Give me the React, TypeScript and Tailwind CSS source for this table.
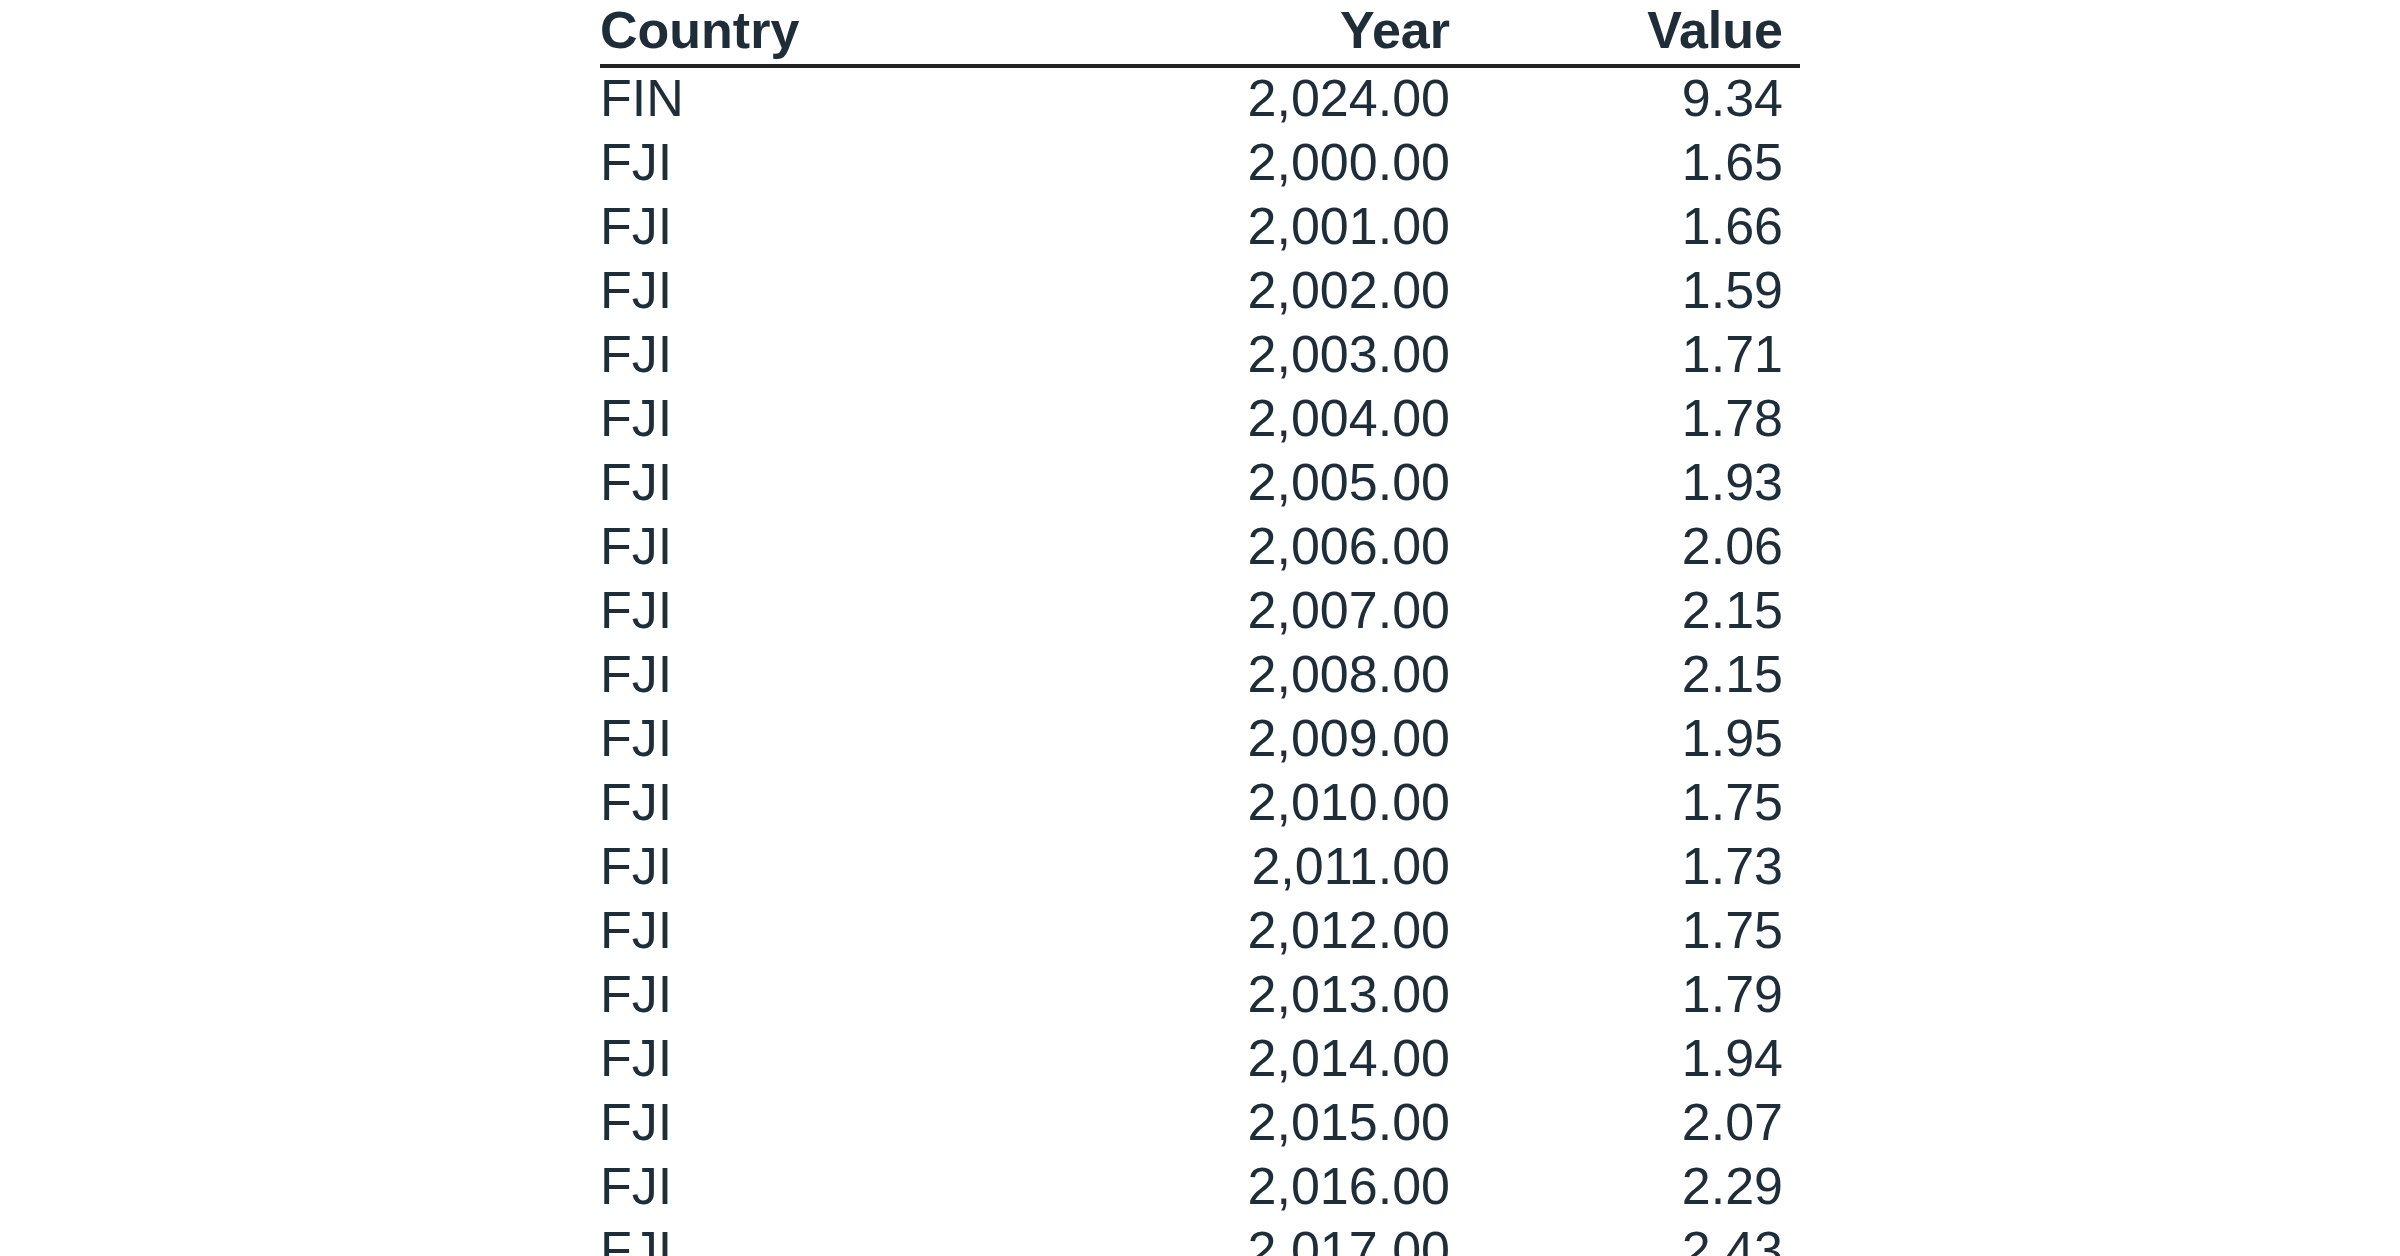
import React from 'react';

const rows: [string, string, string][] = [
  ['FIN', '2,024.00', '9.34'],
  ['FJI', '2,000.00', '1.65'],
  ['FJI', '2,001.00', '1.66'],
  ['FJI', '2,002.00', '1.59'],
  ['FJI', '2,003.00', '1.71'],
  ['FJI', '2,004.00', '1.78'],
  ['FJI', '2,005.00', '1.93'],
  ['FJI', '2,006.00', '2.06'],
  ['FJI', '2,007.00', '2.15'],
  ['FJI', '2,008.00', '2.15'],
  ['FJI', '2,009.00', '1.95'],
  ['FJI', '2,010.00', '1.75'],
  ['FJI', '2,011.00', '1.73'],
  ['FJI', '2,012.00', '1.75'],
  ['FJI', '2,013.00', '1.79'],
  ['FJI', '2,014.00', '1.94'],
  ['FJI', '2,015.00', '2.07'],
  ['FJI', '2,016.00', '2.29'],
  ['FJI', '2,017.00', '2.43'],
];

const App: React.FC = () => {
  return (
    <div className="w-full h-[1256px] overflow-hidden bg-white font-['Liberation_Sans',Arial,sans-serif] text-[#1e2d38]">
      <div className="w-[1200px] mx-auto">
        {/* header */}
        <div className="grid grid-cols-[461px_400px_339px] h-16 border-b-4 border-[#222222] box-content text-[52px] font-bold leading-[60px]">
          <div>Country</div>
          <div className="text-right pr-[11px]">Year</div>
          <div className="text-right pr-[17px]">Value</div>
        </div>
        {/* body */}
        {rows.map(([country, year, value], i) => (
          <div key={i} className="grid grid-cols-[461px_400px_339px] h-16 text-[52px] leading-[60px]">
            <div>{country}</div>
            <div className="text-right pr-[11px]">{year}</div>
            <div className="text-right pr-[17px]">{value}</div>
          </div>
        ))}
      </div>
    </div>
  );
};

export default App;
